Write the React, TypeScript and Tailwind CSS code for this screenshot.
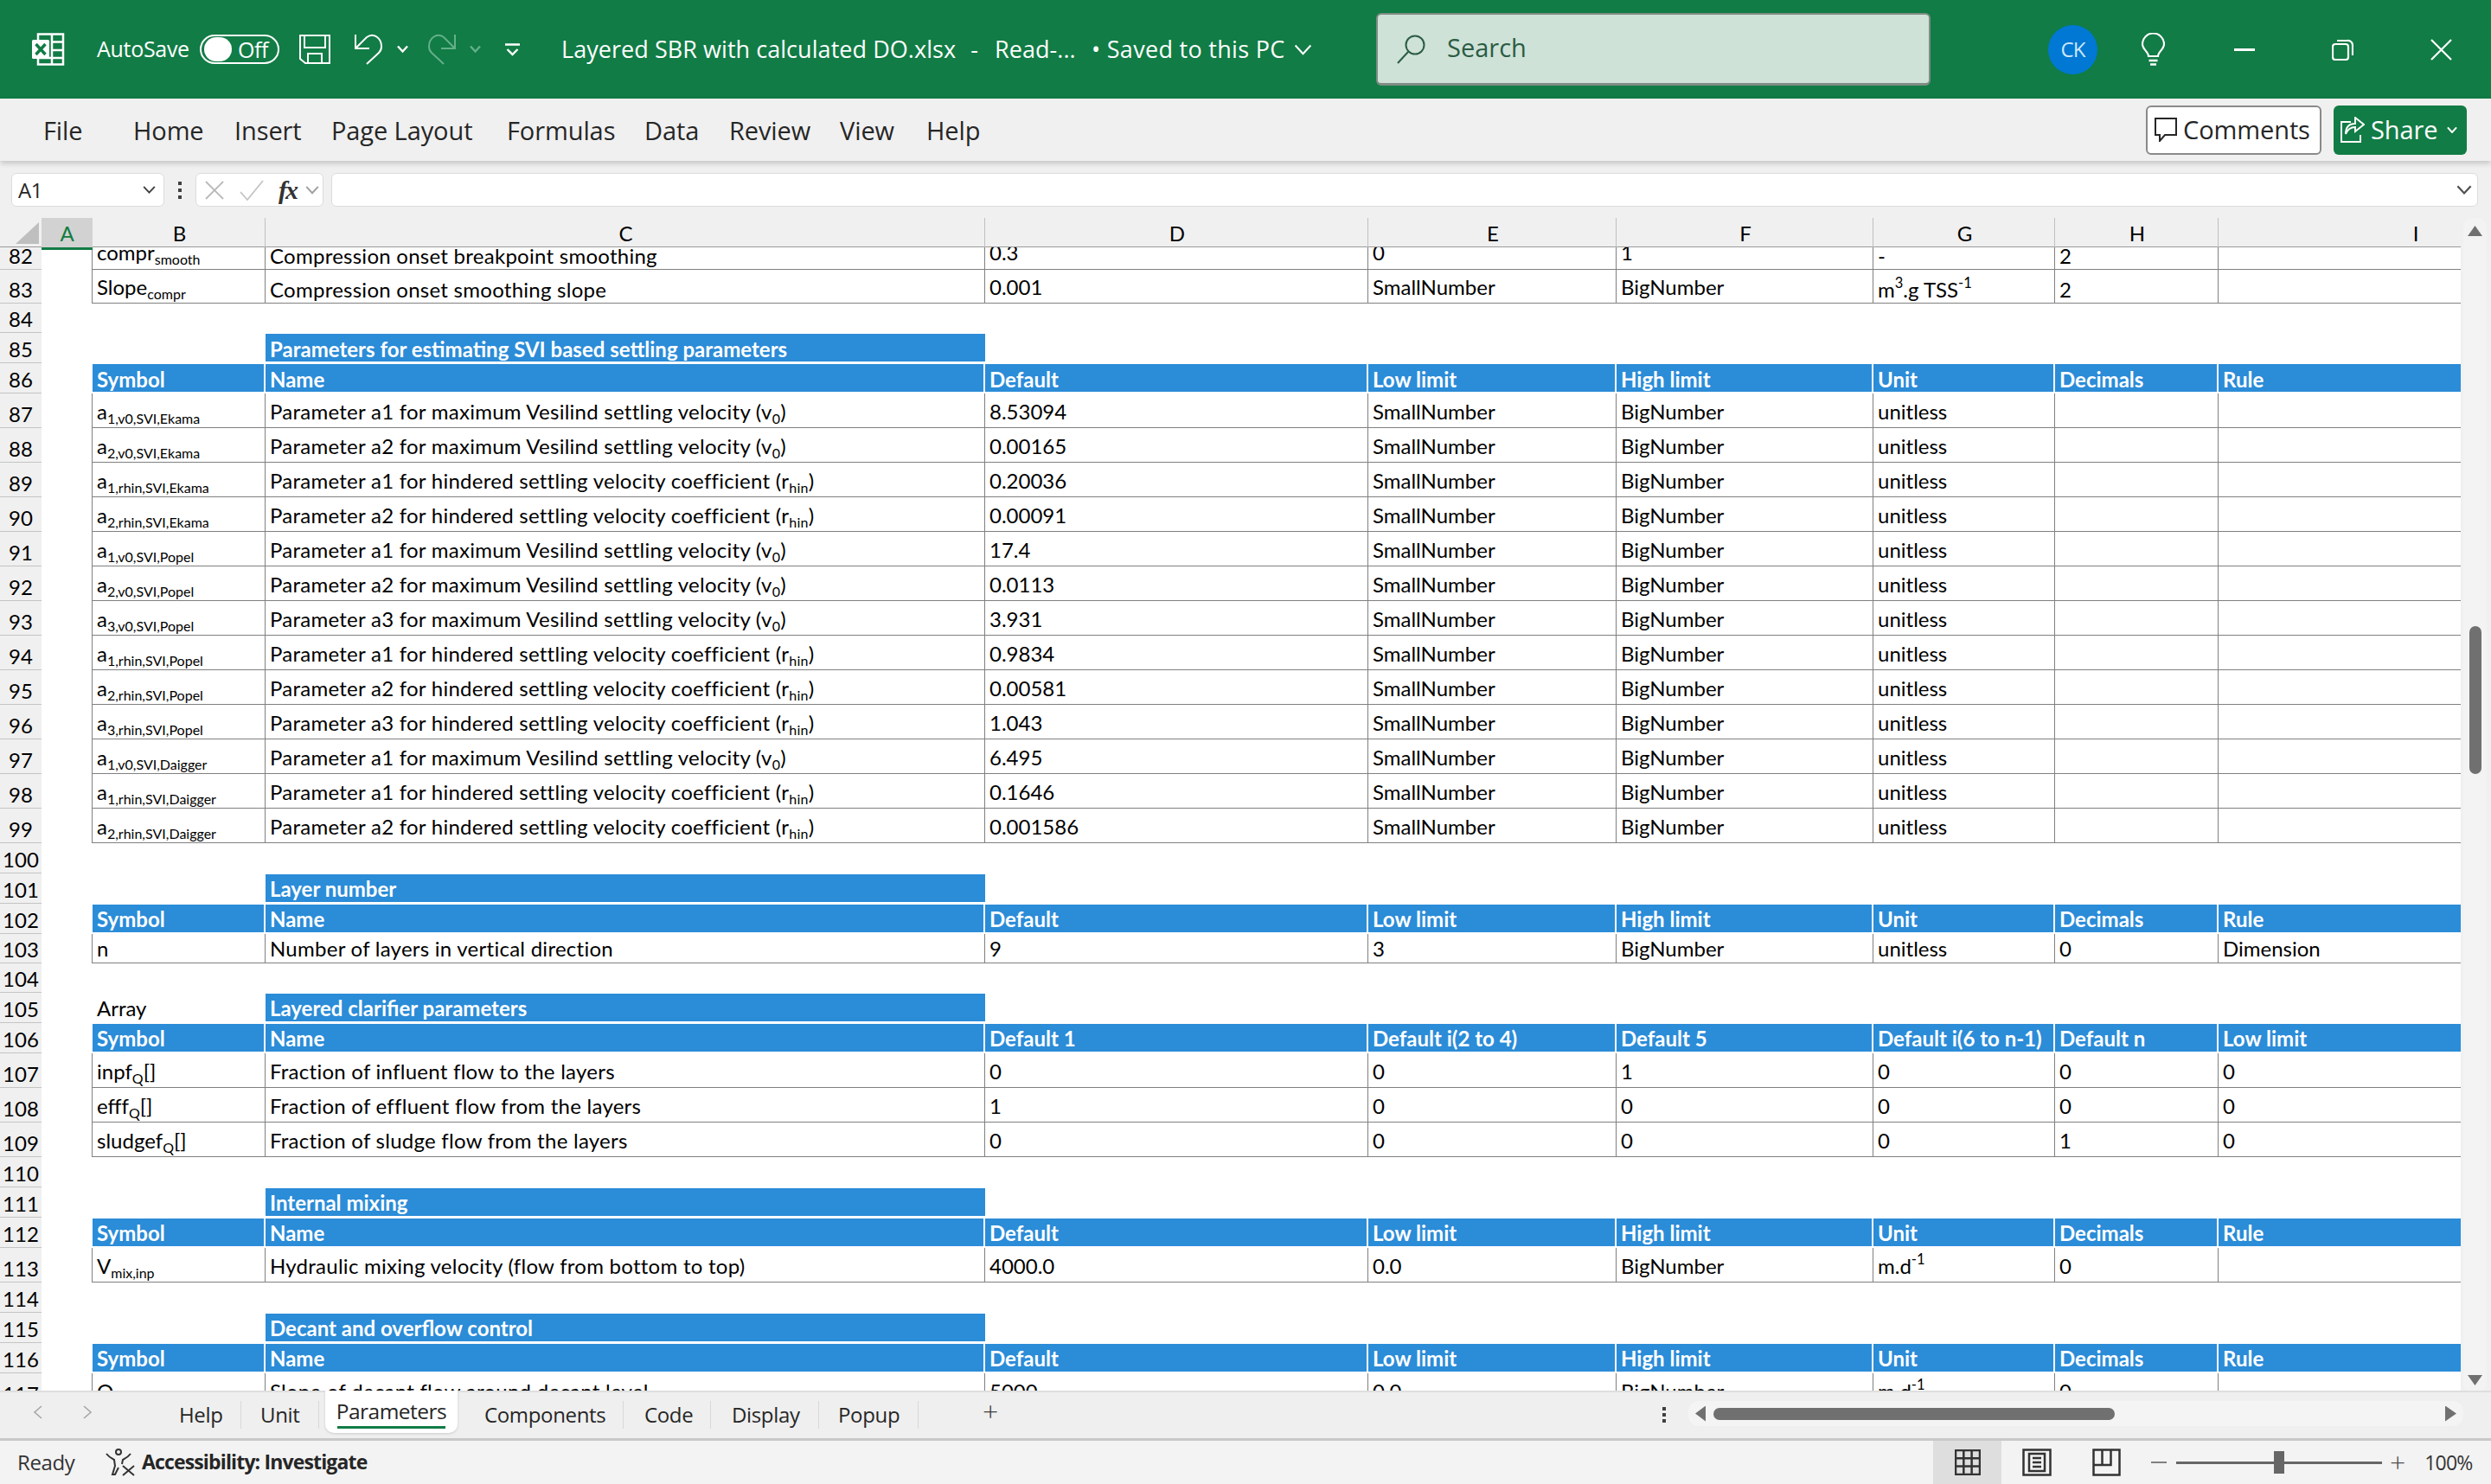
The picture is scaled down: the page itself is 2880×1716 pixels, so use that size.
import React from "react";

const GRID = "grid grid-cols-[48px_59px_200px_832px_443px_287px_297px_210px_189px_454px]";
const CELLFONT = "font-['Lato',sans-serif] text-[24px] leading-[28px] text-black whitespace-nowrap";

const Sub = ({ t }: { t: string }) => (
  <span className="text-[16px] leading-[0] align-[-5px]">{t}</span>
);
const Sup = ({ t }: { t: string }) => (
  <span className="text-[16.5px] leading-[0] align-[11px]">{t}</span>
);
const S = (a: string, b: string, c = "") => (
  <>
    {a}
    <Sub t={b} />
    {c}
  </>
);
const maxN = (n: string) => S(`Parameter a${n} for maximum Vesilind settling velocity (v`, "0", ")");
const hinN = (n: string) => S(`Parameter a${n} for hindered settling velocity coefficient (r`, "hin", ")");
const Std = (d: string) => [d, "SmallNumber", "BigNumber", "unitless", "", ""];
const HEAD = ["Symbol", "Name", "Default", "Low limit", "High limit", "Unit", "Decimals", "Rule"];
const MD = (
  <>
    m.d
    <Sup t="-1" />
  </>
);
const TSS = (
  <>
    m
    <Sup t="3" />
    .g TSS
    <Sup t="-1" />
  </>
);

type Row = {
  n: number;
  h: string;
  kind: "blank" | "title" | "head" | "data";
  cells?: React.ReactNode[];
  title?: string;
  b?: string;
  low?: number[];
  pb?: string;
  pt?: string;
};

const rows: Row[] = [
  {
    n: 82,
    h: "h-[26px]",
    kind: "data",
    low: [1, 5, 6],
    cells: [S("compr", "smooth"), "Compression onset breakpoint smoothing", "0.3", "0", "1", "-", "2", ""],
  },
  {
    n: 83,
    h: "h-[39px]",
    kind: "data",
    low: [1, 5, 6],
    pb: "pb-[4px]",
    cells: [S("Slope", "compr"), "Compression onset smoothing slope", "0.001", "SmallNumber", "BigNumber", TSS, "2", ""],
  },
  { n: 84, h: "h-[34px]", kind: "blank" },
  { n: 85, h: "h-[35px]", kind: "title", pt: "pt-[4px]", title: "Parameters for estimating SVI based settling parameters" },
  { n: 86, h: "h-[35px]", kind: "head", pt: "pt-[4px]", cells: HEAD },
  { n: 87, h: "h-[40px]", kind: "data", cells: [S("a", "1,v0,SVI,Ekama"), maxN("1"), ...Std("8.53094")] },
  { n: 88, h: "h-[40px]", kind: "data", cells: [S("a", "2,v0,SVI,Ekama"), maxN("2"), ...Std("0.00165")] },
  { n: 89, h: "h-[40px]", kind: "data", cells: [S("a", "1,rhin,SVI,Ekama"), hinN("1"), ...Std("0.20036")] },
  { n: 90, h: "h-[40px]", kind: "data", cells: [S("a", "2,rhin,SVI,Ekama"), hinN("2"), ...Std("0.00091")] },
  { n: 91, h: "h-[40px]", kind: "data", cells: [S("a", "1,v0,SVI,Popel"), maxN("1"), ...Std("17.4")] },
  { n: 92, h: "h-[40px]", kind: "data", cells: [S("a", "2,v0,SVI,Popel"), maxN("2"), ...Std("0.0113")] },
  { n: 93, h: "h-[40px]", kind: "data", cells: [S("a", "3,v0,SVI,Popel"), maxN("3"), ...Std("3.931")] },
  { n: 94, h: "h-[40px]", kind: "data", cells: [S("a", "1,rhin,SVI,Popel"), hinN("1"), ...Std("0.9834")] },
  { n: 95, h: "h-[40px]", kind: "data", cells: [S("a", "2,rhin,SVI,Popel"), hinN("2"), ...Std("0.00581")] },
  { n: 96, h: "h-[40px]", kind: "data", cells: [S("a", "3,rhin,SVI,Popel"), hinN("3"), ...Std("1.043")] },
  { n: 97, h: "h-[40px]", kind: "data", cells: [S("a", "1,v0,SVI,Daigger"), maxN("1"), ...Std("6.495")] },
  { n: 98, h: "h-[40px]", kind: "data", cells: [S("a", "1,rhin,SVI,Daigger"), hinN("1"), ...Std("0.1646")] },
  { n: 99, h: "h-[40px]", kind: "data", cells: [S("a", "2,rhin,SVI,Daigger"), hinN("2"), ...Std("0.001586")] },
  { n: 100, h: "h-[35px]", kind: "blank" },
  { n: 101, h: "h-[35px]", kind: "title", title: "Layer number" },
  { n: 102, h: "h-[35px]", kind: "head", cells: HEAD },
  {
    n: 103,
    h: "h-[34px]",
    kind: "data",
    pb: "pb-[2px]",
    cells: ["n", "Number of layers in vertical direction", "9", "3", "BigNumber", "unitless", "0", "Dimension"],
  },
  { n: 104, h: "h-[34px]", kind: "blank" },
  { n: 105, h: "h-[35px]", kind: "title", title: "Layered clarifier parameters", b: "Array" },
  {
    n: 106,
    h: "h-[35px]",
    kind: "head",
    cells: ["Symbol", "Name", "Default 1", "Default i(2 to 4)", "Default 5", "Default i(6 to n-1)", "Default n", "Low limit"],
  },
  { n: 107, h: "h-[40px]", kind: "data", cells: [S("inpf", "Q", "[]"), "Fraction of influent flow to the layers", "0", "0", "1", "0", "0", "0"] },
  { n: 108, h: "h-[40px]", kind: "data", cells: [S("efff", "Q", "[]"), "Fraction of effluent flow from the layers", "1", "0", "0", "0", "0", "0"] },
  { n: 109, h: "h-[40px]", kind: "data", cells: [S("sludgef", "Q", "[]"), "Fraction of sludge flow from the layers", "0", "0", "0", "0", "1", "0"] },
  { n: 110, h: "h-[35px]", kind: "blank" },
  { n: 111, h: "h-[35px]", kind: "title", title: "Internal mixing" },
  { n: 112, h: "h-[35px]", kind: "head", cells: HEAD },
  {
    n: 113,
    h: "h-[40px]",
    kind: "data",
    cells: [S("V", "mix,inp"), "Hydraulic mixing velocity (flow from bottom to top)", "4000.0", "0.0", "BigNumber", MD, "0", ""],
  },
  { n: 114, h: "h-[35px]", kind: "blank" },
  { n: 115, h: "h-[35px]", kind: "title", title: "Decant and overflow control" },
  { n: 116, h: "h-[35px]", kind: "head", cells: HEAD },
  {
    n: 117,
    h: "h-[40px]",
    kind: "data",
    cells: [S("Q", "slope"), "Slope of decant flow around decant level", "5000", "0.0", "BigNumber", MD, "0", ""],
  },
];

const RowNum = ({ n, h }: { n: number; h: string }) => (
  <div className={`${h} flex items-end justify-center overflow-hidden bg-[#f0f0f0] border-b border-[#c4c4c4] pb-[1px] ${CELLFONT}`}>
    {n}
  </div>
);

const SheetRow = ({ r }: { r: Row }) => {
  if (r.kind === "blank") {
    return (
      <div className={`${GRID} ${r.h}`}>
        <RowNum n={r.n} h={r.h} />
      </div>
    );
  }
  if (r.kind === "title") {
    return (
      <div className={`${GRID} ${r.h}`}>
        <RowNum n={r.n} h={r.h} />
        <div />
        <div className={`flex items-end pl-[5px] pb-[3px] ${CELLFONT}`}>{r.b}</div>
        <div className="pt-[1px] pb-[2px]">
          <div className={`h-full bg-[#2b8cd8] pl-[5px] ${CELLFONT} font-bold text-white`}>
            <div className={`${r.pt ?? "pt-[3px]"} text-white`}>{r.title}</div>
          </div>
        </div>
      </div>
    );
  }
  if (r.kind === "head") {
    return (
      <div className={`${GRID} ${r.h}`}>
        <RowNum n={r.n} h={r.h} />
        <div />
        {r.cells!.map((c, i) => (
          <div key={i} className={`pt-[1px] pb-[2px] ${i === 7 ? "" : "pr-[2px]"}`}>
            <div className={`h-full bg-[#2b8cd8] pl-[5px] ${r.pt ?? "pt-[3px]"} ${CELLFONT} font-bold text-white`}>
              <span className="text-white">{c}</span>
            </div>
          </div>
        ))}
      </div>
    );
  }
  return (
    <div className={`${GRID} ${r.h}`}>
      <RowNum n={r.n} h={r.h} />
      <div className="border-r border-[#808080]" />
      {r.cells!.map((c, i) => (
        <div
          key={i}
          className={`flex items-end overflow-hidden pl-[5px] border-r border-b border-[#808080] ${CELLFONT} ${
            i === 1 ? "tracking-[0.26px]" : ""
          } ${r.low && r.low.includes(i) ? "pb-[1px]" : r.pb ? r.pb : r.low ? "pb-[5px]" : "pb-[4px]"}`}
        >
          <span>{c}</span>
        </div>
      ))}
    </div>
  );
};

const ColHead = ({ t, className = "" }: { t: string; className?: string }) => (
  <div className={`flex items-center justify-center border-r border-[#c0c0c0] pl-[2px] ${CELLFONT} ${className}`}>{t}</div>
);

const Chev = ({ c = "#fff", w = 2.4, s = 13 }: { c?: string; w?: number; s?: number }) => (
  <svg width={s} height={s * 0.7} viewBox="0 0 13 9" fill="none" stroke={c} strokeWidth={w} className="shrink-0">
    <path d="M1 1.5 6.5 7.5 12 1.5" />
  </svg>
);

const TitleBar = () => (
  <div className="flex h-[114px] shrink-0 items-center bg-[#117c45] pl-[37px] text-white">
    <svg width="38" height="38" viewBox="0 0 38 38" className="shrink-0">
      <path d="M7 1.500h29v35H7z" fill="none" stroke="#fff" strokeWidth="2.500" />
      <path d="M23 2v34M23 10.500h13M23 20h13M23 29h13M8 29h15" stroke="#fff" strokeWidth="2.500" />
      <rect x="0" y="8" width="20" height="22" rx="1.500" fill="#fff" />
      <path d="M4.500 13l11 12M15.500 13l-11 12" stroke="#117c45" strokeWidth="3.400" />
    </svg>
    <span className="ml-[37px] w-[107px] shrink-0 whitespace-nowrap text-[25px] tracking-[-0.3px]">AutoSave</span>
    <div className="ml-[12px] flex h-[34px] w-[92px] shrink-0 items-center rounded-full border-2 border-white">
      <div className="ml-[3px] h-[28px] w-[32px] rounded-full bg-white" />
      <span className="ml-[7px] text-[25px] leading-none tracking-[-0.4px]">Off</span>
    </div>
    <svg width="36" height="34" viewBox="0 0 36 34" fill="none" stroke="#fff" strokeWidth="2" className="ml-[23px] shrink-0">
      <path d="M1 1h34v32H7l-6-5z" />
      <path d="M6 1v14h24V1M10 33V22h16v11" />
    </svg>
    <svg width="32" height="36" viewBox="0 0 32 36" fill="none" stroke="#fff" strokeWidth="2" className="ml-[28px] shrink-0">
      <path d="M1 1v16h16" />
      <path d="M1 17 14 4C22-2 31 5 31 15c0 3-1 5-3 7L14 35" />
    </svg>
    <div className="ml-[17px] shrink-0"><Chev /></div>
    <svg width="32" height="36" viewBox="0 0 32 36" fill="none" stroke="#64b08a" strokeWidth="2" className="ml-[23px] shrink-0">
      <path d="M31 1v16H15" />
      <path d="M31 17 18 4C10-2 1 5 1 15c0 3 1 5 3 7l14 13" />
    </svg>
    <div className="ml-[16px] shrink-0"><Chev c="#64b08a" /></div>
    <svg width="17" height="15" viewBox="0 0 17 15" fill="none" stroke="#fff" strokeWidth="2.400" className="ml-[28px] shrink-0">
      <path d="M0 1.500h17M2.500 7l6 6 6-6" />
    </svg>
    <div className="ml-[48px] flex shrink-0 items-center whitespace-pre text-[27px] tracking-[0.05px]">
      <span className="w-[501px]">
        Layered SBR with calculated DO.xlsx<span className="ml-[17px]">-</span>
      </span>
      <span className="w-[112px]">Read-...</span>
      <span className="w-[234px] tracking-[0.3px]">• Saved to this PC</span>
      <Chev s={21} w={1.300} />
    </div>
    <div className="ml-[74px] flex h-[84px] w-[641px] shrink-0 items-center rounded-[6px] border-2 border-b-[3px] border-[#7f8c85] bg-[#cfe2d8] pl-[22px] text-[#2b5c44]">
      <svg width="33" height="34" viewBox="0 0 33 34" fill="none" stroke="#2b5c44" strokeWidth="2" className="shrink-0">
        <circle cx="21" cy="12" r="10.500" />
        <path d="M13 20 1 33" />
      </svg>
      <span className="mb-[4px] ml-[25px] text-[29px] leading-none">Search</span>
    </div>
    <div className="ml-[136px] flex h-[57px] w-[57px] shrink-0 items-center justify-center rounded-full bg-[#0078d4] text-[24px] tracking-[-1px] text-[#cfe7fa]">
      CK
    </div>
    <svg width="27" height="38" viewBox="0 0 27 38" fill="none" stroke="#fff" strokeWidth="2.200" className="ml-[51px] shrink-0">
      <path d="M8 27c0-5-7-8-7-14a12.500 12.500 0 0 1 25 0c0 6-7 9-7 14z" />
      <path d="M8.500 32h10M10 36.500h7" strokeWidth="2.600" />
    </svg>
    <div className="ml-[80px] h-[3px] w-[24px] shrink-0 bg-white" />
    <svg width="25" height="25" viewBox="0 0 25 25" fill="none" stroke="#fff" strokeWidth="2.200" className="ml-[89px] shrink-0">
      <rect x="1" y="6" width="18" height="18" rx="3" />
      <path d="M6 2h12a5.500 5.500 0 0 1 6 6v11" />
    </svg>
    <svg width="25" height="25" viewBox="0 0 25 25" fill="none" stroke="#fff" strokeWidth="2.200" className="ml-[89px] shrink-0">
      <path d="M1 1l23 23M24 1 1 24" />
    </svg>
  </div>
);

const RibbonTabs = () => (
  <div className="relative z-10 flex h-[72px] shrink-0 items-center bg-[#f0f0f0] pl-[50px] pr-[28px] pt-[2px] text-[29px] tracking-[-0.1px] text-[#262626] shadow-[0_3px_6px_rgba(0,0,0,0.18)]">
    <span className="w-[104px]">File</span>
    <span className="w-[117px]">Home</span>
    <span className="w-[112px]">Insert</span>
    <span className="w-[203px]">Page Layout</span>
    <span className="w-[159px]">Formulas</span>
    <span className="w-[98px]">Data</span>
    <span className="w-[128px]">Review</span>
    <span className="w-[100px]">View</span>
    <span>Help</span>
    <div className="-mt-[2px] ml-auto flex h-[57px] w-[203px] items-center rounded-[6px] border-2 border-[#8a8a8a] bg-white pl-[8px]">
      <svg width="26" height="28" viewBox="0 0 26 28" fill="none" stroke="#262626" strokeWidth="2" className="shrink-0">
        <path d="M1 1h24v19H12l-6 7v-7H1z" />
      </svg>
      <span className="ml-[7px] text-[#262626]">Comments</span>
    </div>
    <div className="-mt-[2px] ml-[14px] flex h-[57px] w-[154px] items-center rounded-[6px] bg-[#117c45] pl-[8px] text-white">
      <svg width="28" height="30" viewBox="0 0 28 30" fill="none" stroke="#fff" strokeWidth="2" className="shrink-0">
        <path d="M12 6H1v23h22v-8" />
        <path d="M17 1l10 8-10 8v-5c-6 0-9 3-11 8 0-8 4-12 11-12z" />
      </svg>
      <span className="ml-[7px]">Share</span>
      <div className="ml-[11px]"><Chev c="#fff" w={2.200} s={12} /></div>
    </div>
  </div>
);

const FormulaBar = () => (
  <div className="flex h-[66px] shrink-0 items-start bg-[#f0f0f0] pl-[13px] pt-[14px]">
    <div className="flex h-[39px] w-[177px] items-center justify-between rounded-[6px] border border-[#dcdcdc] bg-white pl-[7px] pr-[9px] font-['Open_Sans',sans-serif] text-[24px] tracking-[-0.5px] text-[#262626]">
      A1
      <Chev c="#404040" w={1.600} s={15} />
    </div>
    <div className="ml-[16px] mt-[10px] flex flex-col gap-[4px]">
      <div className="h-[4px] w-[4px] bg-[#404040]" />
      <div className="h-[4px] w-[4px] bg-[#404040]" />
      <div className="h-[4px] w-[4px] bg-[#404040]" />
    </div>
    <div className="ml-[16px] flex h-[39px] w-[148px] items-center rounded-[6px] border border-[#dcdcdc] bg-white pl-[9px]">
      <svg width="24" height="24" viewBox="0 0 24 24" fill="none" stroke="#b8b8b8" strokeWidth="1.800" className="shrink-0">
        <path d="M2 2l20 20M22 2 2 22" />
      </svg>
      <svg width="28" height="24" viewBox="0 0 28 24" fill="none" stroke="#c4c4c4" strokeWidth="1.800" className="ml-[17px] shrink-0">
        <path d="M1 14l8 9L27 1" />
      </svg>
      <span className="ml-[17px] font-['Liberation_Serif',serif] text-[30px] font-bold italic leading-none tracking-[-2px] text-[#333]">fx</span>
      <div className="ml-[10px]"><Chev c="#a0a0a0" w={1.600} s={16} /></div>
    </div>
    <div className="ml-[9px] flex h-[39px] w-[2482px] items-center justify-end rounded-[6px] border border-[#dcdcdc] bg-white pr-[6px]">
      <Chev c="#505050" w={1.600} s={18} />
    </div>
  </div>
);

const Grid = () => (
  <div className="h-[1356px] w-[2845px] shrink-0 overflow-hidden bg-white">
    <div className={`${GRID} h-[34px] border-b border-[#9a9a9a] bg-[#f0f0f0]`}>
      <div className="relative">
        <div className="absolute left-[18px] top-[5px] h-[25px] w-[27px] bg-[#bfbfbf] [clip-path:polygon(100%_0,100%_100%,0_100%)]" />
      </div>
      <div className="relative flex items-center justify-center bg-[#d2d2d2] font-['Lato',sans-serif] text-[24px] text-[#107c41]">
        A
        <div className="absolute bottom-[-1px] left-0 h-[3px] w-full bg-[#117c45]" />
      </div>
      {["B", "C", "D", "E", "F", "G", "H"].map((c) => (
        <ColHead key={c} t={c} />
      ))}
      <ColHead t="I" className="border-r-0" />
    </div>
    <div>
      {rows.map((r) => (
        <SheetRow key={r.n} r={r} />
      ))}
    </div>
  </div>
);

const VScroll = () => (
  <div className="flex h-[1356px] w-[35px] shrink-0 bg-[#f0f0f0] pl-[3px] pr-[5px]">
    <div className="flex h-[1358px] w-[27px] flex-col items-center rounded-[10px] bg-[#f3f3f3] pt-[9px]">
      <div className="h-[12px] w-[17px] bg-[#707070] [clip-path:polygon(50%_0,100%_100%,0_100%)]" />
      <div className="mt-[451px] h-[171px] w-[14px] rounded-[7px] bg-[#707070]" />
      <div className="mt-[695px] h-[12px] w-[17px] bg-[#707070] [clip-path:polygon(0_0,100%_0,50%_100%)]" />
    </div>
  </div>
);

const Tab = ({ t, w }: { t: string; w: string }) => (
  <div className={`flex h-[32px] shrink-0 items-center border-r border-[#d8d8d8] ${w}`}>
    <span className="whitespace-nowrap text-[24px] tracking-[-0.35px] text-[#262626]">{t}</span>
  </div>
);

const SheetTabs = () => (
  <div className="relative z-10 flex h-[58px] shrink-0 border-t-2 border-b-[3px] border-t-[#dedede] border-b-[#c8c8c8] bg-[#efefef]">
    <div className="flex h-[45px] w-[185px] shrink-0 items-center pl-[38px]">
      <svg width="11" height="16" viewBox="0 0 11 16" fill="none" stroke="#a6a6a6" strokeWidth="1.600">
        <path d="M10 1 2 8l8 7" />
      </svg>
      <svg width="11" height="16" viewBox="0 0 11 16" fill="none" stroke="#a6a6a6" strokeWidth="1.600" className="ml-[47px]">
        <path d="M1 1l8 7-8 7" />
      </svg>
    </div>
    <div className="flex items-start pt-[10px]">
      <Tab t="Help" w="w-[94px] pl-[22px]" />
      <Tab t="Unit" w="w-[90px] pl-[22px]" />
    </div>
    <div className="relative -mt-[2px] ml-[7px] mr-[7px] flex h-[49px] w-[153px] shrink-0 flex-col items-center rounded-b-[10px] bg-white shadow-[0_1px_3px_rgba(0,0,0,0.15)]">
      <span className="mt-[7px] whitespace-nowrap text-[24.5px] font-medium leading-[34px] tracking-[-0.5px] text-[#262626]">Parameters</span>
      <div className="h-[3px] w-[125px] bg-[#117c45]" />
    </div>
    <div className="flex items-start pt-[10px]">
      <Tab t="Components" w="w-[185px] pl-[24px]" />
      <Tab t="Code" w="w-[101px] pl-[24px]" />
      <Tab t="Display" w="w-[125px] pl-[24px]" />
      <Tab t="Popup" w="w-[115px] pl-[22px]" />
    </div>
    <div className="w-[860px] shrink-0 pl-[74px] pt-[4px]">
      <span className="text-[32px] font-light leading-[36px] text-[#404040]">+</span>
    </div>
    <div className="mt-[17px] flex shrink-0 flex-col gap-[3px]">
      <div className="h-[4px] w-[4px] bg-[#404040]" />
      <div className="h-[4px] w-[4px] bg-[#404040]" />
      <div className="h-[4px] w-[4px] bg-[#404040]" />
    </div>
    <div className="ml-[26px] mt-[10px] flex h-[29px] w-[896px] shrink-0 items-center rounded-[12px] bg-[#f4f4f4] pl-[8px]">
      <div className="h-[18px] w-[12px] bg-[#707070] [clip-path:polygon(100%_0,100%_100%,0_50%)]" />
      <div className="ml-[9px] h-[14px] w-[464px] rounded-[7px] bg-[#707070]" />
      <div className="ml-[382px] h-[18px] w-[13px] bg-[#707070] [clip-path:polygon(0_0,100%_50%,0_100%)]" />
    </div>
  </div>
);

const StatusBar = () => (
  <div className="flex h-[50px] shrink-0 items-center bg-[#f3f3f3] pl-[20px] text-[#333]">
    <span className="w-[102px] shrink-0 text-[24px] tracking-[-0.4px]">Ready</span>
    <svg width="34" height="32" viewBox="0 0 34 32" fill="none" stroke="#333" strokeWidth="2" className="shrink-0">
      <circle cx="15" cy="4" r="3" />
      <path d="M1 6c3 4 7 6 9 7l1 7-3 10h3l4-8M29 6c-3 4-7 6-9 7l-1 5" />
      <path d="M20 20l13 11M33 20 20 31" />
    </svg>
    <span className="mb-[2px] ml-[8px] w-[262px] shrink-0 whitespace-nowrap text-[23px] font-bold tracking-[-0.85px] text-[#262626]">Accessibility: Investigate</span>
    <div className="ml-[1809px] flex h-[50px] w-[79px] shrink-0 items-center justify-center bg-[#dedede]">
      <svg width="30" height="30" viewBox="0 0 30 30" fill="none" stroke="#333" strokeWidth="2.500">
        <path d="M1 1h28v28H1zM10.300 1v28M19.600 1v28M1 10.300h28M1 19.600h28" />
      </svg>
    </div>
    <svg width="34" height="32" viewBox="0 0 34 32" fill="none" stroke="#333" strokeWidth="2.500" className="ml-[24px] shrink-0">
      <path d="M1.500 1.500h31v29h-31zM8 6h18v20H8z" />
      <path d="M12 11h10M12 16h10M12 21h10" />
    </svg>
    <svg width="33" height="32" viewBox="0 0 33 32" fill="none" stroke="#333" strokeWidth="2.500" className="ml-[47px] shrink-0">
      <path d="M1.500 1.500h30v29h-30zM1.500 19h20V1.500M11.500 1.500V19" />
    </svg>
    <div className="ml-[35px] h-[2px] w-[18px] shrink-0 bg-[#808080]" />
    <div className="ml-[11px] flex w-[238px] shrink-0 items-center">
      <div className="h-[3px] w-[113px] bg-[#666]" />
      <div className="h-[26px] w-[12px] bg-[#666]" />
      <div className="h-[3px] w-[113px] bg-[#666]" />
    </div>
    <span className="ml-[9px] text-[32px] font-light leading-none text-[#505050]">+</span>
    <span className="ml-[22px] text-[23px] tracking-[-0.8px]">100%</span>
  </div>
);

export default function App() {
  return (
    <div className="flex h-[1716px] w-[2880px] flex-col overflow-hidden bg-[#f0f0f0] font-['Open_Sans',sans-serif]">
      <TitleBar />
      <RibbonTabs />
      <FormulaBar />
      <div className="flex h-[1356px] shrink-0">
        <Grid />
        <VScroll />
      </div>
      <SheetTabs />
      <StatusBar />
    </div>
  );
}
